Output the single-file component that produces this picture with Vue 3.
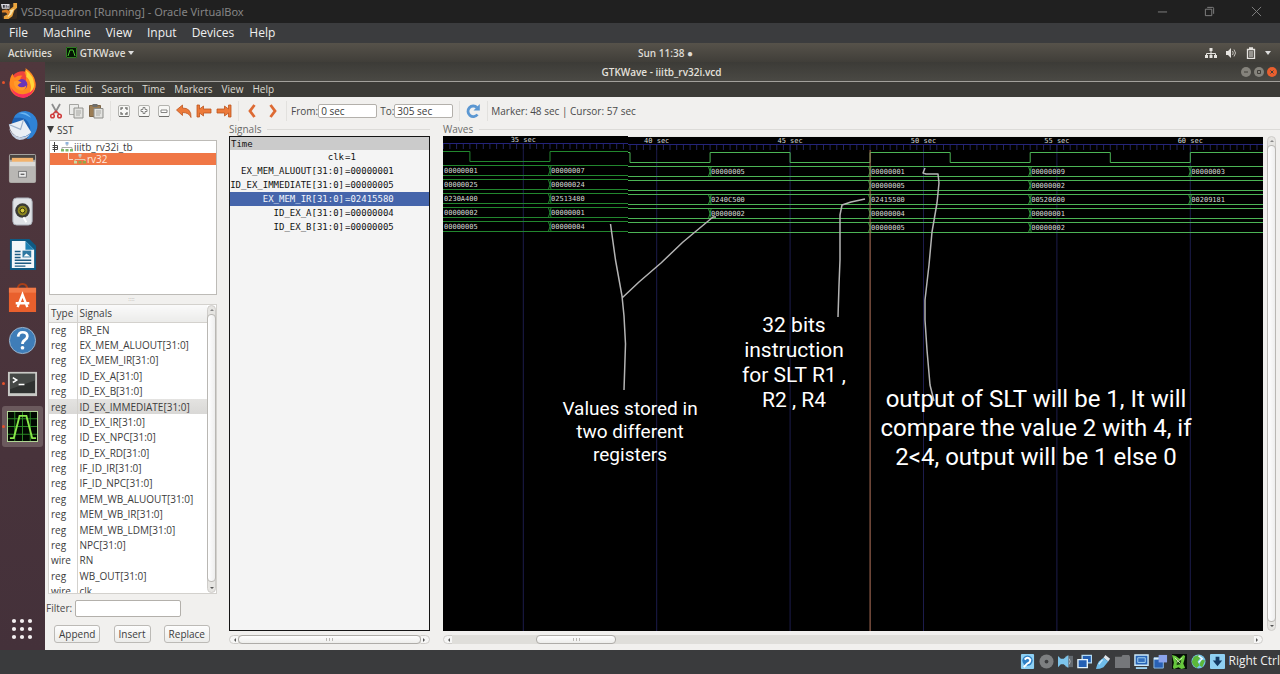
<script setup>
const hostMenus = ['File', 'Machine', 'View', 'Input', 'Devices', 'Help']
const appMenus = ['File', 'Edit', 'Search', 'Time', 'Markers', 'View', 'Help']

const signalList = [
  ['reg', 'BR_EN'],
  ['reg', 'EX_MEM_ALUOUT[31:0]'],
  ['reg', 'EX_MEM_IR[31:0]'],
  ['reg', 'ID_EX_A[31:0]'],
  ['reg', 'ID_EX_B[31:0]'],
  ['reg', 'ID_EX_IMMEDIATE[31:0]'],
  ['reg', 'ID_EX_IR[31:0]'],
  ['reg', 'ID_EX_NPC[31:0]'],
  ['reg', 'ID_EX_RD[31:0]'],
  ['reg', 'IF_ID_IR[31:0]'],
  ['reg', 'IF_ID_NPC[31:0]'],
  ['reg', 'MEM_WB_ALUOUT[31:0]'],
  ['reg', 'MEM_WB_IR[31:0]'],
  ['reg', 'MEM_WB_LDM[31:0]'],
  ['reg', 'NPC[31:0]'],
  ['wire', 'RN'],
  ['reg', 'WB_OUT[31:0]'],
  ['wire', 'clk'],
]

const traces = [
  { name: 'clk', value: '1' },
  { name: 'EX_MEM_ALUOUT[31:0]', value: '00000001' },
  { name: 'ID_EX_IMMEDIATE[31:0]', value: '00000005' },
  { name: 'EX_MEM_IR[31:0]', value: '02415580', selected: true },
  { name: 'ID_EX_A[31:0]', value: '00000004' },
  { name: 'ID_EX_B[31:0]', value: '00000005' },
]

// Time axis: seconds to canvas pixels
const xAt = (t) => Math.round((80.3 + (t - 35) * 26.68) * 10) / 10

const buses = [
  [[32, '00000001'], [36, '00000007'], [42, '00000005'], [48, '00000001'], [54, '00000009'], [60, '00000003']],
  [[32, '00000025'], [36, '00000024'], [48, '00000005'], [54, '00000002']],
  [[32, '0230A400'], [36, '02513480'], [42, '0240C500'], [48, '02415580'], [54, '00520600'], [60, '00209181']],
  [[32, '00000002'], [36, '00000001'], [42, '00000002'], [48, '00000004'], [54, '00000001']],
  [[32, '00000005'], [36, '00000004'], [48, '00000005'], [54, '00000002']],
]

const split = 185
const within = (t, from, to) => xAt(t) >= from && xAt(t) < to
const buildSegment = (cls, from, to, top) => ({
  cls,
  from,
  end: cls === 'near' ? split : '100%',
  top,
  ticks: Array.from({ length: 125 }, (_, i) => 32 + i / 4).filter((t) => within(t, from, to)).map(xAt),
  labels: [35, 40, 45, 50, 55, 60].filter((t) => within(t, from, to)).map((t) => ({ t, x: xAt(t) })),
  rows: buses.map((bus, i) => ({
    y: 30 + i * 14,
    cells: bus
      .filter(([t]) => (t === 32 ? cls === 'near' : within(t, from, to)))
      .map(([t, v]) => ({ v, x: t === 32 ? 0 : xAt(t), edge: t !== 32 })),
  })),
})
const segments = [buildSegment('near', 0, split, -1), buildSegment('far', split, 2000, 0)]

const clockNear = `M0 16.5H${xAt(33)}V26.5H${xAt(36)}V16.5H${split}`
const clockFar = `M${split} 16.5H${xAt(39)}V26.5H${xAt(42)}V16.5H${xAt(45)}V26.5H${xAt(48)}V16.5H${xAt(51)}V26.5H${xAt(54)}V16.5H${xAt(57)}V26.5H${xAt(60)}V16.5H2000`
</script>

<template>
  <div class="host">
    <header class="host-title">
      <svg class="vbox" viewBox="0 0 18 18">
        <rect x="1" y="1" width="16" height="16" rx="2" fill="#33291f" />
        <path d="M13 0h4v5l-3 3-2 6-4 3H3v-3l4-2 2-5 4-3z" fill="#eba53d" />
        <path d="M9 8l5-2-3 6-4 3z" fill="#fbe3a8" />
        <path d="M1 8l5-1 4 2-2 4-3-3H1z" fill="#d9822a" />
        <path d="M0 1h9v5H1z" fill="#d8d8de" />
        <path d="M2 2h2v3H2zM5 2h1v3H5zM7 3h1v2H7z" fill="#3a3a40" />
      </svg>
      <h1>VSDsquadron [Running] - Oracle VirtualBox</h1>
      <button aria-label="Minimize"><svg viewBox="0 0 12 12"><path d="M1 6.500h10" /></svg></button>
      <button aria-label="Restore"><svg viewBox="0 0 12 12"><path d="M1.500 3.500h7v7h-7zM3.500 1.500h6q1 0 1 1v6" /></svg></button>
      <button aria-label="Close"><svg viewBox="0 0 12 12"><path d="M1 1l10 10M11 1L1 11" /></svg></button>
    </header>
    <nav class="host-menu">
      <button v-for="m in hostMenus" :key="m">{{ m }}</button>
    </nav>

    <div class="topbar">
      <div class="top-left">
        <button>Activities</button>
        <button class="app-menu">
          <svg viewBox="0 0 11 11" width="11" height="11"><rect width="11" height="11" fill="#041504" /><path d="M.5.5h10v10H.5z" stroke="#2f7a22" fill="none" /><path d="M2 9l2-6h3l2 6" stroke="#46c52d" fill="none" /></svg>
          GTKWave
          <svg viewBox="0 0 6 4" width="6" height="4"><path d="M0 0h6L3 4z" fill="#ddd" /></svg>
        </button>
      </div>
      <button class="clock">Sun 11:38 ●</button>
      <div class="top-right">
        <svg viewBox="0 0 12 12" width="12" height="12"><path d="M4.500 1h3v3h-3zM0 8h3v3H0zM4.500 8h3v3h-3zM9 8h3v3H9z" fill="#e6e4e0" /><path d="M6 4v4M1.500 8V6.500h9V8" fill="none" stroke="#e6e4e0" /></svg>
        <svg viewBox="0 0 12 12" width="12" height="12"><path d="M1 4h2l3-3v10L3 8H1z" fill="#e6e4e0" /><path d="M7.500 4q1.500 2 0 4M9 2.500q3 3.500 0 7" fill="none" stroke="#c4c1bb" /></svg>
        <svg viewBox="0 0 12 12" width="12" height="12"><path d="M2.500 2.500h7v9h-7zM4 1h4" fill="none" stroke="#e6e4e0" stroke-width="1.300" /><path d="M4 5h4M4 7h4M4 9h4" stroke="#e6e4e0" /></svg>
        <svg viewBox="0 0 6 4" width="6" height="4"><path d="M0 0h6L3 4z" fill="#ddd" /></svg>
      </div>
    </div>

    <div class="desktop">
      <aside class="dock">
        <a href="#" class="running" aria-label="Firefox">
          <svg viewBox="0 0 32 32"><circle cx="16" cy="18" r="13.500" fill="#f0443c" /><path d="M3 15q0-5 3-8 0 3 2 4 4-3 8-2-3 2-2 5 3-1 5 2 2-6-1-10 2-3 1-5 9 6 10 14 2 8-4 13-7 5-14 2Q2 26 3 15z" fill="#ff8a1f" /><path d="M19 3q9 6 9 15 0 6-5 9 3-5 1-10-1-5-4-7 1-4-1-7z" fill="#ffd43a" /><path d="M4 21q5 8 13 7 8 0 11-7-1 9-11 11Q7 31 4 21z" fill="#fb2f5c" /><circle cx="15.500" cy="18" r="5.500" fill="#6a35b8" /><path d="M7 15q4-2 8 1-3 1-4 3 4 4 9 0-1 6-7 5-6-2-6-9z" fill="#ff9a2a" /></svg>
        </a>
        <a href="#" aria-label="Thunderbird">
          <svg viewBox="0 0 32 32"><circle cx="18" cy="15" r="13" fill="#1d62b5" /><path d="M7 8Q10 1 19 1q9 1 12 10 2 10-5 17-3 2-6 2 6-8 3-15-3-7-9-7-4 0-7 0z" fill="#2f83d6" /><path d="M12 3q8-2 13 5-6-4-13-5z" fill="#6cb6f0" /><path d="M2 15l15-5 8 13q-5 5-12 5Q4 27 2 15z" fill="#e9eef5" /><path d="M2 15l12 5 3-10" fill="none" stroke="#9db1cb" stroke-width="1.200" /><path d="M2 18q3 9 12 10 6 0 10-4-3 7-11 7Q4 29 2 18z" fill="#c3d0e2" /></svg>
        </a>
        <a href="#" aria-label="Files">
          <svg viewBox="0 0 32 32"><rect x="2" y="1" width="28" height="30" rx="2" fill="#a9a7a4" /><path d="M3 2h26v5H3z" fill="#4a4643" /><path d="M5 5h22v5H5z" fill="#f2b26c" /><rect x="3" y="9" width="26" height="5" fill="#dcdbd8" /><rect x="3" y="14" width="26" height="16" fill="#b9b7b4" /><rect x="12" y="19" width="8" height="6" fill="#eee" stroke="#777" /><path d="M14 22h4" stroke="#666" stroke-width="1.500" /></svg>
        </a>
        <a href="#" aria-label="Rhythmbox">
          <svg viewBox="0 0 32 32"><rect x="6" y="2" width="20" height="28" rx="4" fill="#dfe2e6" stroke="#a4a9b3" /><circle cx="16" cy="15" r="7.500" fill="#3a3a35" /><circle cx="16" cy="15" r="5" fill="#8a8520" /><circle cx="16" cy="15" r="2.500" fill="#d6c93c" stroke="#33310e" /><path d="M17 22l3 5" stroke="#fff" stroke-width="2" /></svg>
        </a>
        <a href="#" aria-label="LibreOffice Writer">
          <svg viewBox="0 0 32 32"><path d="M3 0h20l7 7v25H3z" fill="#0e5a83" /><path d="M5 2h14l9 9v19H5z" fill="#f3f7fa" /><path d="M19 2v9h9z" fill="#1e81b4" /><path d="M8 13h6M8 16h6M8 19h6M8 22h17M8 25h17M8 28h11" stroke="#1c5c82" stroke-width="1.500" /><rect x="16" y="12" width="9" height="7" fill="#2e78a1" /><path d="M17 18l3-3 4 3" fill="#fff" /></svg>
        </a>
        <a href="#" aria-label="Ubuntu Software">
          <svg viewBox="0 0 32 32"><path d="M11 8q0-6 5-6t5 6" fill="none" stroke="#a93f18" stroke-width="2" /><path d="M2 6h28v25H2z" fill="#e9602d" /><path d="M2 6h28v5H2z" fill="#f27a48" /><path d="M11 26l5-13 5 13M9 22h14" fill="none" stroke="#fff" stroke-width="2.500" /></svg>
        </a>
        <a href="#" aria-label="Help">
          <svg viewBox="0 0 32 32"><circle cx="16" cy="16" r="13.500" fill="#3f7db8" stroke="#9bb6ce" /><path d="M11.500 12q.5-4.500 4.500-4.500 5 0 5 4 0 2-2.500 4-2.500 1.500-2.500 4" fill="none" stroke="#fff" stroke-width="2.800" /><circle cx="16" cy="23.500" r="1.900" fill="#fff" /></svg>
        </a>
        <a href="#" class="running" aria-label="Terminal">
          <svg viewBox="0 0 32 32"><rect x="1" y="4" width="30" height="25" fill="#c9c9c6" /><rect x="3" y="6" width="26" height="20" fill="#2f3130" /><path d="M3 6h26v7L3 22z" fill="#454846" /><path d="M6 10l4 2.500-4 2.500M12 17h6" fill="none" stroke="#fff" stroke-width="1.600" /></svg>
        </a>
        <a href="#" class="running active" aria-label="GTKWave">
          <svg viewBox="0 0 32 32"><rect x="0" y="0" width="32" height="32" fill="#b7dc9a" /><rect x="1" y="1" width="30" height="30" fill="#020a02" /><path d="M1 8h30M1 16h30M1 24h30M8 1v30M16 1v30M24 1v30" stroke="#2b8a26" /><path d="M3 28h4l6-23h7l6 23h4" fill="none" stroke="#8ae84a" stroke-width="2" /></svg>
        </a>
        <button class="apps" aria-label="Show Applications">
          <svg viewBox="0 0 22 22"><g fill="#f4f0f1"><circle v-for="n in 9" :key="n" :cx="3 + ((n - 1) % 3) * 8" :cy="3 + Math.floor((n - 1) / 3) * 8" r="2.100" /></g></svg>
        </button>
      </aside>

      <main class="window">
        <div class="win-title">
          <h2>GTKWave - iiitb_rv32i.vcd</h2>
          <button aria-label="Minimize window"><svg viewBox="0 0 8 8"><path d="M2 4h4" /></svg></button>
          <button aria-label="Maximize window"><svg viewBox="0 0 8 8"><path d="M2.500 2.500h3v3h-3z" /></svg></button>
          <button class="close" aria-label="Close window"><svg viewBox="0 0 8 8"><path d="M2.500 2.500l3 3M5.500 2.500l-3 3" /></svg></button>
        </div>
        <nav class="win-menu">
          <button v-for="m in appMenus" :key="m">{{ m }}</button>
        </nav>

        <div class="toolbar">
          <button aria-label="Cut"><svg viewBox="0 0 16 16"><path d="M4 1l5 9M12 1L7 10" stroke="#8d8d8d" stroke-width="1.800" /><circle cx="4.500" cy="13" r="1.800" fill="none" stroke="#cf3a3a" stroke-width="1.500" /><circle cx="11.500" cy="13" r="1.800" fill="none" stroke="#cf3a3a" stroke-width="1.500" /><path d="M5 11l3-3 3 3" fill="none" stroke="#cf3a3a" stroke-width="1.500" /></svg></button>
          <button aria-label="Copy"><svg viewBox="0 0 16 16"><path d="M1.500 1.500h9v10h-9z" fill="#ececea" stroke="#a5a5a1" /><path d="M6 5h9v10H6z" fill="#e2e2df" stroke="#92928e" /><path d="M8 8h5M8 10h5M8 12h4" stroke="#a9a9a5" /></svg></button>
          <button aria-label="Paste"><svg viewBox="0 0 16 16"><path d="M1.500 2.500h11v11h-11z" fill="#9b7d55" stroke="#7d6546" /><path d="M4.500 1h5v3h-5z" fill="#6e6e6c" /><path d="M6 5.500h9v9.500H6z" fill="#e2e2df" stroke="#8d8d89" /><path d="M8 8h5M8 10h5M8 12h4" stroke="#a9a9a5" /></svg></button>
          <i class="sep"></i>
          <button aria-label="Zoom fit"><svg viewBox="0 0 16 16"><rect x="2.500" y="2.500" width="11" height="11" rx="1.500" fill="#f7f7f5" stroke="#b3b3af" /><path d="M3 13.500h10" stroke="#70706d" /><path d="M5 7V5h2M9 5h2v2M11 9v2H9M7 11H5V9" fill="none" stroke="#757572" stroke-width="1.300" /></svg></button>
          <button aria-label="Zoom in"><svg viewBox="0 0 16 16"><rect x="2.500" y="2.500" width="11" height="11" rx="1.500" fill="#f7f7f5" stroke="#b3b3af" /><path d="M3 13.500h10" stroke="#70706d" /><path d="M7 4.500h2v2h2v2H9v2H7v-2H5v-2h2z" fill="#fff" stroke="#858582" /></svg></button>
          <button aria-label="Zoom out"><svg viewBox="0 0 16 16"><rect x="2.500" y="2.500" width="11" height="11" rx="1.500" fill="#f7f7f5" stroke="#b3b3af" /><path d="M3 13.500h10" stroke="#70706d" /><path d="M5 7h6v2.500H5z" fill="#fff" stroke="#858582" /></svg></button>
          <button aria-label="Zoom undo"><svg viewBox="0 0 16 16"><path d="M.5 7l6-5v3q9 0 8.500 9.500Q13 9.500 6.500 9.500v3z" fill="#ec7a3a" stroke="#bd5520" stroke-width=".8" /></svg></button>
          <button aria-label="Zoom to start"><svg viewBox="0 0 16 16"><path d="M1 2h2.500v4l4-3v3H15v4H7.500v3l-4-3v4H1z" fill="#ec7a3a" stroke="#bd5520" stroke-width=".8" /></svg></button>
          <button aria-label="Zoom to end"><svg viewBox="0 0 16 16"><path d="M15 2h-2.500v4l-4-3v3H1v4h7.500v3l4-3v4H15z" fill="#ec7a3a" stroke="#bd5520" stroke-width=".8" /></svg></button>
          <i class="sep"></i>
          <button aria-label="Previous edge"><svg viewBox="0 0 16 16"><path d="M10.500 2L6 8l4.500 6" fill="none" stroke="#dd6a33" stroke-width="2.800" /></svg></button>
          <button aria-label="Next edge"><svg viewBox="0 0 16 16"><path d="M6.500 2L11 8l-4.500 6" fill="none" stroke="#dd6a33" stroke-width="2.800" /></svg></button>
          <i class="sep"></i>
          <label for="from">From:</label><input id="from" type="text" value="0 sec" />
          <label for="to">To:</label><input id="to" type="text" value="305 sec" />
          <i class="sep"></i>
          <button aria-label="Reload"><svg viewBox="0 0 16 16"><path d="M12.500 11.500A5.300 5.300 0 1 1 12 4.500" fill="none" stroke="#5b97d2" stroke-width="2.800" /><path d="M14.800 1v6.500H8.500z" fill="#5b97d2" /></svg></button>
          <i class="sep"></i>
          <span class="status">Marker: 48 sec | Cursor: 57 sec</span>
        </div>

        <div class="panes">
          <section class="sst">
            <h3><svg viewBox="0 0 8 8" width="7" height="7"><path d="M0 0h8L4 8z" fill="#3c3c3c" /></svg>SST</h3>
            <div class="tree">
              <div class="node">
                <svg viewBox="0 0 23 12" width="23" height="12"><path d="M2.500 4.500h5v4h-5M2.500 6.500h5M4.500 1v10" fill="none" stroke="#444" /><path d="M17 2v3M12 9V6.500h10V9" stroke="#aaa" fill="none" /><path d="M15.500 1h3v2.500h-3z" fill="#8fb3dc" /><path d="M11 8h3v2.500h-3zM15.500 8h3v2.500h-3zM20 8h3v2.500h-3z" fill="#7cb86b" /></svg>
                iiitb_rv32i_tb
              </div>
              <div class="node child">
                <svg viewBox="0 0 23 12" width="23" height="12"><path d="M5.500 0v6.500H10" fill="none" stroke="#fbd8c6" /><path d="M17 2v3M12 9V6.500h10V9" stroke="#e8c9b0" fill="none" /><path d="M15.500 1h3v2.500h-3z" fill="#c9cfc8" /><path d="M11 8h3v2.500h-3z" fill="#c8dca5" /><path d="M15.500 8h3v2.500h-3zM20 8h3v2.500h-3z" fill="#93a84a" /></svg>
                rv32
              </div>
            </div>
            <div class="grip">::::</div>
            <div class="list">
              <table>
                <thead><tr><th>Type</th><th>Signals</th></tr></thead>
                <tbody>
                  <tr v-for="[type, name] in signalList" :key="name" :class="{ selected: name === 'ID_EX_IMMEDIATE[31:0]' }">
                    <td>{{ type }}</td><td>{{ name }}</td>
                  </tr>
                </tbody>
              </table>
              <div class="vbar"><i class="arrow up"></i><i class="thumb"></i><i class="arrow down"></i></div>
            </div>
            <div class="filter"><label for="filter">Filter:</label><input id="filter" type="text" /></div>
            <div class="actions"><button>Append</button><button>Insert</button><button>Replace</button></div>
          </section>

          <div class="splitter"></div>

          <section class="frame names">
            <h3>Signals</h3>
            <div class="name-box">
              <div class="time">Time</div>
              <div v-for="s in traces" :key="s.name" class="trace" :class="{ selected: s.selected }">
                <span>{{ s.name }}</span><span>={{ s.value }}</span>
              </div>
            </div>
            <div class="hbar full"><i class="arrow left"></i><i class="track"><i class="thumb"></i></i><i class="arrow right"></i></div>
          </section>

          <section class="frame waves">
            <h3>Waves</h3>
            <div class="canvas">
              <svg class="plot" width="100%" height="100%">
                <rect :x="split" y="0" width="100%" height="1" fill="#e9e9e7" />
                <g v-for="s in segments" :key="s.cls" :class="s.cls" :transform="`translate(0 ${s.top})`">
                  <line v-for="l in s.labels" :key="l.t" class="grid" :x1="l.x" :x2="l.x" y1="9" y2="101%" />
                  <line class="axis" :x1="s.from" :x2="s.end" y1="8.5" y2="8.5" />
                  <line v-for="x in s.ticks" :key="x" class="tick" :x1="x" :x2="x" y1="9" y2="14" />
                  <text v-for="l in s.labels" :key="'l' + l.t" :x="l.x" y="7" text-anchor="middle">{{ l.t }} sec</text>
                  <g v-for="r in s.rows" :key="r.y">
                    <line class="rail" :x1="s.from" :x2="s.end" :y1="r.y + 0.5" :y2="r.y + 0.5" />
                    <line class="rail" :x1="s.from" :x2="s.end" :y1="r.y + 10.5" :y2="r.y + 10.5" />
                    <g v-for="c in r.cells" :key="c.x">
                      <path v-if="c.edge" class="cross" :d="`M${c.x - 1.5} ${r.y + 1}L${c.x} ${r.y + 5.5}L${c.x - 1.5} ${r.y + 10}M${c.x + 1} ${r.y + 1}L${c.x} ${r.y + 5.5}L${c.x + 1} ${r.y + 10}`" />
                      <text :x="c.x + 1" :y="r.y + 8">{{ c.v }}</text>
                    </g>
                  </g>
                </g>
                <path class="clk near" :d="clockNear" transform="translate(0 -1)" />
                <path class="clk far" :d="clockFar" />
                <line class="marker" :x1="xAt(48)" :x2="xAt(48)" y1="14" y2="100%" />
                <g class="pen">
                  <path d="M167.500 88l5 36 6.500 36 2 20 1.500 28-1.500 46M179 162l17-16 22-19 22-21 24-20 6-5h3" />
                  <path d="M422 63l-14 3-9 3-2 10v45l-1 25-1 32" />
                  <path d="M482 32l-2 5 3 1h12l1 9-2 20-5 29-3 33-4 35v20l2 30 3 35 4 16" />
                </g>
              </svg>
              <p class="note registers">Values stored in<br />two different<br />registers</p>
              <p class="note instruction">32 bits<br />instruction<br />for SLT R1 ,<br />R2 , R4</p>
              <p class="note output">output of SLT will be 1, It will<br />compare the value 2 with 4, if<br />2&lt;4, output will be 1 else 0</p>
            </div>
            <div class="vbar"><i class="arrow up"></i><i class="thumb"></i><i class="arrow down"></i></div>
            <div class="hbar"><i class="arrow left"></i><i class="track"><i class="thumb"></i></i><i class="arrow right"></i></div>
          </section>
        </div>
      </main>
    </div>

    <footer class="host-status">
      <svg viewBox="0 0 16 16"><rect x="1" y="0" width="14" height="16" rx="1" fill="#8ed0f3" /><circle cx="8" cy="7" r="5.500" fill="#2f7fc4" /><path d="M5 6q3-4 6 0 0 3-3 4l-4 4" fill="none" stroke="#fff" stroke-width="2" /></svg>
      <svg viewBox="0 0 16 16"><circle cx="8" cy="8" r="7.500" fill="#7d7f81" /><circle cx="8" cy="8" r="2" fill="#3b3c3e" /></svg>
      <svg viewBox="0 0 16 16"><rect x="8" y="2" width="8" height="12" fill="#646a70" /><path d="M0 2l3 3h3l5-4v14l-5-4H3l-3 3z" fill="#7cc4ec" /><path d="M12 5q2 3 0 6" fill="none" stroke="#b9bdc0" /></svg>
      <svg viewBox="0 0 16 16"><path d="M5.500 1.500h10v8h-10z" fill="#2460b4" stroke="#b4dbf4" stroke-width="1.500" /><path d="M1 6h10v8.500H1z" fill="#2460b4" stroke="#e3f3fc" stroke-width="1.500" /></svg>
      <svg viewBox="0 0 16 16"><path d="M10 1l5 4-2 3-5-4z" fill="#dfe6ec" /><path d="M8 4l5 4-5 6q-4 2-8 2 1-5 3-8z" fill="#6fbdea" /><path d="M7 6l-4 5" fill="none" stroke="#c9eaff" stroke-width="1.500" /></svg>
      <svg viewBox="0 0 16 16"><path d="M0 3h7l1-2h7l1 2v12H0z" fill="#75777a" /></svg>
      <svg viewBox="0 0 16 16"><path d="M1 1h14v11H1z" fill="#2763b4" stroke="#cdeafa" stroke-width="1.500" /><path d="M4 4h8v5H4z" fill="#3470be" stroke="#a5d4f2" /><path d="M2 15h12" stroke="#9ed3f2" stroke-width="2" /></svg>
      <svg viewBox="0 0 16 16"><path d="M1 4h10v11H1z" fill="#2a61b5" stroke="#8fbde8" /><path d="M6 1h9v8H6z" fill="#8ba3ec" /><path d="M1 4h5v2H1z" fill="#d9ecf8" /></svg>
      <svg viewBox="0 0 16 16"><rect x="0" y="0" width="16" height="16" fill="#071007" /><path d="M0 1l4 1 4 3 4-4 2 1-1 5-1 3 2 5-4 1-3-2-5 2-1-2 1-5z" fill="#67c83d" /><path d="M5 6l5 1-1 4-4 1z" fill="#1c4a12" /><path d="M3 4l6 6M11 4L5 9" stroke="#d3f5b8" /></svg>
      <svg viewBox="0 0 16 16"><circle cx="8" cy="8" r="7.500" fill="#75c3e8" /><path d="M3 3l5-2 2 3-3 4 2 4-3 3q-5-3-5-7zM11 6l4 1-3 7-3-2z" fill="#5cb83a" /><path d="M8 2l4 3-4 4" stroke="#effaff" fill="none" stroke-width="1.500" /></svg>
      <svg viewBox="0 0 16 16"><rect x="0" y="0" width="16" height="16" rx="1" fill="#8fd0f2" /><path d="M6 3h4v4h3l-5 6-5-6h3z" fill="#133a63" /></svg>
      <span>Right Ctrl</span>
    </footer>
  </div>
</template>

<style>
html,
body {
  margin: 0;
  overflow: hidden;
}
</style>

<style scoped>
* {
  box-sizing: border-box;
}
button,
input {
  font: inherit;
  color: inherit;
  margin: 0;
  padding: 0;
  border: 0;
  background: none;
}
h1,
h2,
h3,
p {
  margin: 0;
  font-weight: 400;
  font-size: inherit;
}
svg {
  display: block;
  flex: none;
}
.host {
  display: flex;
  flex-direction: column;
  min-height: 100vh;
  background: #3a3b3d;
  font: 10px/14px "Open Sans", "Noto Sans", sans-serif;
  color: #4a4a4a;
}
.host-title {
  display: flex;
  align-items: center;
  height: 23px;
  background: #202020;
  color: #858585;
  font: 11px/16px "Noto Sans", sans-serif;
}
.host-title h1 {
  flex: 1;
}
.host-title .vbox {
  width: 17px;
  height: 17px;
  margin: 0 3px 0 1px;
}
.host-title button {
  width: 47px;
  display: grid;
  place-items: center;
}
.host-title button svg {
  width: 11px;
  height: 11px;
  fill: none;
  stroke: #858585;
}
.host-menu {
  display: flex;
  gap: 15px;
  height: 20px;
  padding-left: 9px;
  background: #3b3c3e;
  color: #f0f0f0;
  font: 12px/20px "Open Sans", sans-serif;
}
.topbar {
  display: grid;
  grid-template-columns: 1fr auto 1fr;
  align-items: center;
  height: 19px;
  padding: 0 9px 0 8px;
  background: linear-gradient(#56524a, #403e39);
  color: #dedbd5;
  font-weight: 600;
}
.top-left,
.top-right {
  display: flex;
  align-items: center;
}
.top-left {
  gap: 14px;
}
.top-right {
  justify-content: flex-end;
  gap: 8px;
}
.app-menu {
  display: flex;
  align-items: center;
  gap: 3px;
}
.clock {
  margin-right: -26px;
  margin-left: 26px;
}
.desktop {
  display: flex;
  flex: 1;
}
.dock {
  display: flex;
  flex-direction: column;
  align-items: center;
  flex: none;
  width: 45px;
  background: linear-gradient(#50373d, #44313a);
}
.dock a {
  position: relative;
  display: grid;
  place-items: center;
  width: 41px;
  height: 41px;
  margin: 0 1px 2px 0;
  border-radius: 3px;
}
.dock a svg {
  width: 31px;
  height: 31px;
}
.dock a.active {
  background: #6b595d;
}
.running::before {
  content: "";
  position: absolute;
  left: 0;
  top: 19px;
  width: 3px;
  height: 3px;
  border-radius: 50%;
  background: #e5522c;
}
.apps {
  margin: auto 1px 10px 0;
}
.apps svg {
  width: 22px;
  height: 22px;
}
.window {
  display: flex;
  flex-direction: column;
  flex: 1;
  min-width: 0;
  background: #f1f0ee;
}
.win-title {
  display: flex;
  align-items: center;
  gap: 5px;
  height: 20px;
  padding-right: 3px;
  background: linear-gradient(#3c3b37, #4a4944);
  border-bottom: 1px solid #a3a19c;
  color: #e4e1dc;
  font-weight: 600;
}
.win-title h2 {
  flex: 1;
  font-weight: inherit;
  text-align: center;
  padding-left: 42px;
}
.win-title button {
  display: grid;
  place-items: center;
  width: 10px;
  height: 10px;
  margin-right: -2px;
  border-radius: 50%;
  background: #85837c;
}
.win-title button:last-child {
  margin-right: 0;
}
.win-title button.close {
  background: #ea5f2e;
}
.win-title svg {
  width: 8px;
  height: 8px;
  fill: none;
  stroke: #403e39;
}
.win-menu {
  display: flex;
  gap: 9px;
  height: 15px;
  padding-left: 5px;
  background: #3c3b37;
  color: #dedbd3;
  line-height: 15px;
}
.toolbar {
  display: flex;
  align-items: center;
  height: 28px;
  padding-left: 1px;
}
.toolbar button {
  display: grid;
  place-items: center;
  width: 20px;
  height: 20px;
}
.toolbar svg {
  width: 16px;
  height: 16px;
}
.toolbar .sep {
  width: 1px;
  height: 20px;
  margin: 0 3px 0 4px;
  background: #e2e1de;
}
.toolbar label {
  padding-left: 1px;
}
.toolbar input {
  width: 59px;
  margin-right: 2px;
}
.toolbar input,
.filter input {
  height: 14px;
  padding: 0 2px;
  border: 1px solid #b3b0ab;
  border-radius: 2px;
  background: #fff;
  color: #3c3c3c;
}
.panes {
  display: flex;
  flex: 1;
}
.sst {
  display: flex;
  flex-direction: column;
  width: 172px;
  padding-left: 1px;
}
.sst h3 {
  display: flex;
  align-items: center;
  gap: 3px;
  height: 15px;
  padding: 0 0 6px 1px;
  line-height: 10px;
  color: #3c3c3c;
}
.tree {
  height: 155px;
  margin-left: 3px;
  border: 1px solid #bdbbb7;
  background: #fff;
  color: #3c3c3c;
}
.node {
  display: flex;
  align-items: center;
  gap: 1px;
  height: 12px;
}
.node.child {
  padding-left: 13px;
  background: #f07746;
  color: #ffe9de;
}
.grip {
  height: 9px;
  text-align: center;
  line-height: 9px;
  font-size: 6px;
  color: #b0aeaa;
}
.list {
  display: flex;
  flex: 1 1 0;
  min-height: 0;
  height: 0;
  margin-left: 2px;
  border: 1px solid #d3d1cd;
  background: #fff;
  overflow: hidden;
}
.list table {
  flex: 1;
  height: 294px;
  border-collapse: collapse;
  color: #3c3c3c;
}
.list th,
.list td {
  height: 15px;
  padding: 0 0 0 2px;
  text-align: left;
  font-weight: 400;
  line-height: 14px;
}
.list th {
  height: 17px;
  background: linear-gradient(#fafafa, #ebebe9);
  border-bottom: 1px solid #d3d1cd;
}
.list th:first-child,
.list td:first-child {
  width: 28px;
  border-right: 1px solid #d3d1cd;
}
.list tr.selected {
  background: linear-gradient(#e4e3e1, #d9d8d6);
}
.filter {
  display: flex;
  align-items: center;
  gap: 3px;
  height: 28px;
}
.filter input {
  width: 106px;
  height: 17px;
}
.actions {
  display: flex;
  justify-content: space-between;
  align-items: center;
  height: 22px;
  margin: 1px 0 5px 3px;
  padding: 0 7px 0 5px;
}
.actions button {
  height: 18px;
  padding: 0 4px;
  border: 1px solid #bcbab6;
  border-radius: 3px;
  background: linear-gradient(#fdfdfd, #ececea);
  color: #3c3c3c;
}
.splitter {
  width: 12px;
}
.frame h3 {
  display: flex;
  align-items: center;
  gap: 6px;
  height: 11px;
  padding-bottom: 3px;
  line-height: 8px;
  color: #6a6a68;
}
.frame h3::after {
  content: "";
  flex: 1;
  height: 1px;
  background: #dcdbd8;
}
.names {
  display: flex;
  flex-direction: column;
  width: 201px;
  margin-right: 13px;
}
.name-box {
  flex: 1;
  border: 1px solid #151515;
  background: #f4f4f4;
  color: #111;
  font: 9px/14px "DejaVu Sans Mono", monospace;
}
.time {
  height: 13px;
  line-height: 14px;
  background: #cbcbcb;
  padding-left: 1px;
}
.trace {
  display: flex;
  gap: 1px;
  height: 14px;
}
.trace span:first-child {
  flex: none;
  width: 114px;
  text-align: right;
}
.trace.selected {
  background: #4565ab;
  color: #f2f5fb;
}
.waves {
  flex: 1;
  display: grid;
  grid-template: 11px 1fr 19px / 1fr 17px;
}
.waves h3 {
  grid-column: 1 / 3;
}
.canvas {
  position: relative;
  background: #000;
}
.plot {
  position: absolute;
  inset: 0;
  font: 7px "DejaVu Sans Mono", monospace;
  fill: #d6dad6;
}
.plot line {
  stroke-width: 1;
}
.grid {
  stroke: #1c1c4c;
}
.axis {
  stroke: #24247a;
}
.tick {
  stroke: #24245f;
}
.near .rail,
.near .cross,
.clk.near {
  stroke: #22862e;
}
.far .rail,
.clk.far {
  stroke: #4cb455;
}
.far .cross {
  stroke: #2f9a3a;
}
.cross,
.clk {
  fill: none;
}
.marker {
  stroke: #b5745d;
}
.pen {
  fill: none;
  stroke: #b4b4b4;
  stroke-width: 1.5;
  stroke-linejoin: round;
}
.note {
  position: absolute;
  color: #fff;
  font-family: Roboto, sans-serif;
  text-align: center;
  white-space: nowrap;
  transform: translateX(-50%);
}
.registers {
  left: 187px;
  top: 261px;
  font-size: 19px;
  line-height: 23px;
}
.instruction {
  left: 351px;
  top: 177px;
  font-size: 21px;
  line-height: 25px;
}
.output {
  left: 593px;
  top: 249px;
  font-size: 24px;
  line-height: 29px;
}
.vbar,
.hbar {
  display: flex;
  align-items: center;
}
.vbar {
  flex-direction: column;
  width: 9px;
  flex: none;
  border: 1px solid #cfcdca;
  border-radius: 5px;
  background: #e6e5e2;
}
.waves .vbar {
  margin-left: 4px;
}
.vbar .thumb {
  flex: 1;
  width: 9px;
  border: 1px solid #b9b7b3;
  border-radius: 4px;
  background: linear-gradient(90deg, #fff, #eee);
}
.list .thumb {
  margin-bottom: 2px;
}
.hbar {
  height: 9px;
  margin: 4px 0 6px;
  border: 1px solid #cfcdca;
  border-radius: 5px;
  background: #f6f6f5;
}
.track {
  flex: 1;
  height: 9px;
  background: #dfdeda;
}
.track .thumb {
  display: grid;
  place-items: center;
  width: 10%;
  height: 9px;
  margin-left: 10.5%;
  border: 1px solid #aeaca8;
  border-radius: 4px;
  background: linear-gradient(#fff, #ededeb);
}
.track .thumb::before {
  content: "";
  width: 7px;
  height: 3px;
  background: repeating-linear-gradient(90deg, #bbb9b5 0 1px, transparent 1px 3px);
}
.full .thumb {
  width: 100%;
  margin-left: 0;
}
.arrow {
  width: 8px;
  height: 8px;
  display: grid;
  place-items: center;
}
.arrow::before {
  content: "";
  border: 2px solid transparent;
}
.arrow.up::before {
  border-bottom-color: #888;
  margin-bottom: 2px;
}
.arrow.down::before {
  border-top-color: #555;
  margin-top: 2px;
}
.arrow.left::before {
  border-right-color: #555;
}
.arrow.right::before {
  border-left-color: #555;
}
.host-status {
  display: flex;
  align-items: center;
  gap: 4px;
  height: 24px;
  padding: 0 0 2px 45px;
  justify-content: flex-end;
  color: #efefef;
  font: 12px/20px "Open Sans", sans-serif;
  white-space: nowrap;
}
.host-status svg {
  width: 15px;
  height: 15px;
}
</style>
